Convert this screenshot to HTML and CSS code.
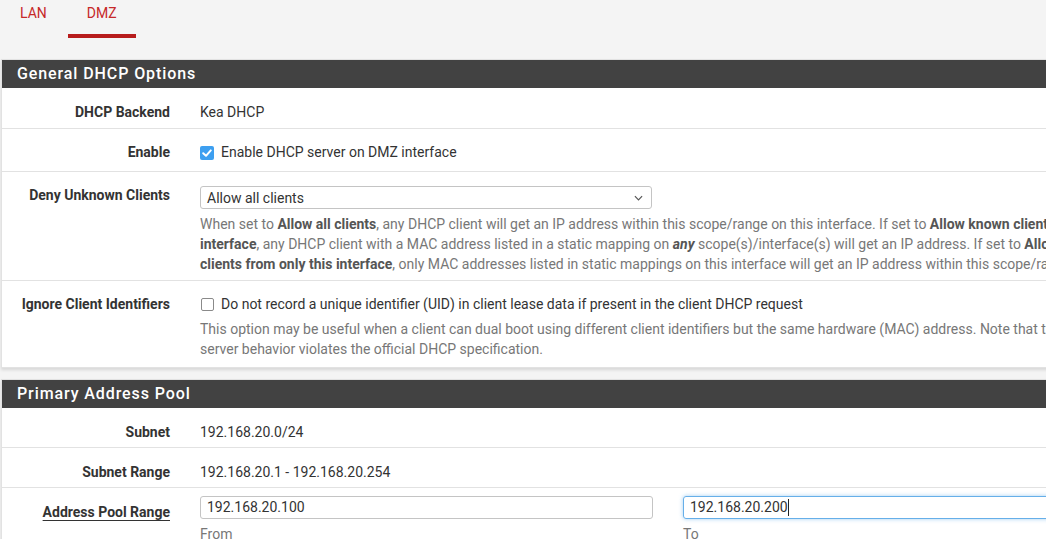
FILE: index.html
```html
<!DOCTYPE html>
<html lang="en">
<head>
<meta charset="utf-8">
<title>DHCP Server - DMZ</title>
<link rel="stylesheet" href="styles.css">
</head>
<body>
<div class="page">
  <nav class="tabs">
    <a class="tab">LAN</a>
    <a class="tab active">DMZ</a>
  </nav>

  <section class="panel">
    <h2 class="panel-heading">General DHCP Options</h2>
    <div class="panel-body">
      <div class="row first">
        <div class="label">DHCP Backend</div>
        <div class="value">Kea DHCP</div>
      </div>
      <div class="row row-check">
        <div class="label">Enable</div>
        <div class="value">
          <label class="check">
            <span class="box checked"><svg viewBox="0 0 14 14" width="14" height="14"><polyline points="3.2,7.2 6,9.8 10.8,4.4" fill="none" stroke="#fff" stroke-width="2" stroke-linecap="round" stroke-linejoin="round"/></svg></span>
            Enable DHCP server on DMZ interface
          </label>
        </div>
      </div>
      <div class="row">
        <div class="label">Deny Unknown Clients</div>
        <div class="value">
          <div class="select">
            <span>Allow all clients</span>
            <svg class="chev" viewBox="0 0 10 6" width="9" height="6"><polyline points="1,1 5,5 9,1" fill="none" stroke="#555" stroke-width="1.3"/></svg>
          </div>
          <p class="help">When set to <b>Allow all clients</b>, any DHCP client will get an IP address within this scope/range on this interface. If set to <b>Allow known clients from any</b><br><b>interface</b>, any DHCP client with a MAC address listed in a static mapping on <b><i>any</i></b> scope(s)/interface(s) will get an IP address. If set to <b>Allow known</b><br><b>clients from only this interface</b>, only MAC addresses listed in static mappings on this interface will get an IP address within this scope/range.</p>
        </div>
      </div>
      <div class="row last">
        <div class="label">Ignore Client Identifiers</div>
        <div class="value">
          <label class="check">
            <span class="box"></span>
            Do not record a unique identifier (UID) in client lease data if present in the client DHCP request
          </label>
          <p class="help">This option may be useful when a client can dual boot using different client identifiers but the same hardware (MAC) address. Note that the resulting<br>server behavior violates the official DHCP specification.</p>
        </div>
      </div>
    </div>
  </section>

  <section class="panel pool">
    <h2 class="panel-heading">Primary Address Pool</h2>
    <div class="panel-body">
      <div class="row">
        <div class="label">Subnet</div>
        <div class="value">192.168.20.0/24</div>
      </div>
      <div class="row">
        <div class="label">Subnet Range</div>
        <div class="value">192.168.20.1 - 192.168.20.254</div>
      </div>
      <div class="row row-range">
        <div class="label"><span class="required">Address Pool Range</span></div>
        <div class="value pair">
          <div class="field">
            <div class="input">192.168.20.100</div>
            <p class="help">From</p>
          </div>
          <div class="field">
            <div class="input focus">192.168.20.200<span class="caret"></span></div>
            <p class="help">To</p>
          </div>
        </div>
      </div>
    </div>
  </section>
</div>
</body>
</html>
```

FILE: styles.css
```css
html, body {
  margin: 0;
  padding: 0;
  overflow: hidden;
  background: #f4f4f4;
}

body {
  font-family: Roboto, "Liberation Sans", sans-serif;
  font-size: 14px;
  line-height: 20px;
  color: #333;
}

.page {
  width: 1200px;
}

.tabs {
  display: flex;
  height: 38px;
}

.tab {
  display: block;
  padding: 3px 20px 11px;
  color: #c62828;
  font-size: 14px;
  line-height: 20px;
  border-bottom: 4px solid transparent;
}

.tab.active {
  border-bottom-color: #b71c1c;
  margin-left: 1px;
  padding: 3px 19px 11px;
}

.panel {
  margin: 21px 0 11px 1px;
  background: #fff;
  border: 1px solid #e2e2e2;
  border-right: none;
  box-shadow: 0 2px 3px rgba(0, 0, 0, 0.12);
}

.panel + .panel {
  margin-top: 0;
}

.panel-heading {
  margin: 0;
  background: #424242;
  color: #fff;
  font-size: 16px;
  font-weight: 500;
  letter-spacing: 0.9px;
  line-height: 28px;
  padding-left: 15px;
}

.panel-body {
  padding-bottom: 2px;
}

.row {
  display: flex;
  padding: 13px 0 6px;
  border-bottom: 1px solid #e2e2e2;
}

.row.first {
  padding-top: 14px;
}

.row.last {
  border-bottom: none;
}

.row-check {
  padding-bottom: 9px;
}

.pool .row {
  padding: 14px 0 5px;
}

.pool .row.row-range {
  padding: 14px 0 0;
  border-bottom: none;
}

.label {
  width: 168px;
  flex: none;
  padding-right: 15px;
  text-align: right;
  font-weight: 700;
  color: #333;
}

.value {
  padding-left: 15px;
  flex: 1;
  min-width: 0;
}

.check {
  display: flex;
  align-items: center;
  white-space: nowrap;
}

.box {
  width: 13px;
  height: 13px;
  margin: 1px 7px 0 1px;
  border: 1px solid #8a8a8a;
  border-radius: 2px;
  box-sizing: border-box;
  flex: none;
  display: flex;
  align-items: center;
  justify-content: center;
}

.box.checked {
  width: 14px;
  height: 14px;
  margin-left: 0;
  background: #3d9ff0;
  border: none;
}

.box svg {
  display: block;
}

.select {
  width: 452px;
  height: 23px;
  box-sizing: border-box;
  margin-top: 1px;
  border: 1px solid #c4c4c4;
  border-radius: 3px;
  padding: 0 6px;
  display: flex;
  align-items: center;
  justify-content: space-between;
  line-height: 20px;
}

.chev {
  margin-right: 2px;
}

.help {
  margin: 5px 0 0;
  color: #777;
  white-space: nowrap;
}

.help b {
  color: #555;
}

.required {
  text-decoration: underline;
  text-underline-offset: 3px;
  text-decoration-thickness: 1px;
}

.pair {
  display: flex;
  gap: 30px;
  margin-top: -6px;
}

.field {
  width: 453px;
  flex: none;
}

.input {
  height: 23px;
  box-sizing: border-box;
  border: 1px solid #c4c4c4;
  border-radius: 3px;
  padding: 0 6px;
  line-height: 21px;
  color: #333;
  display: flex;
  align-items: center;
}

.input.focus {
  border-color: #66afe9;
  box-shadow: 0 0 4px rgba(102, 175, 233, 0.6);
}

.caret {
  display: inline-block;
  width: 1px;
  height: 17px;
  background: #222;
}
```
